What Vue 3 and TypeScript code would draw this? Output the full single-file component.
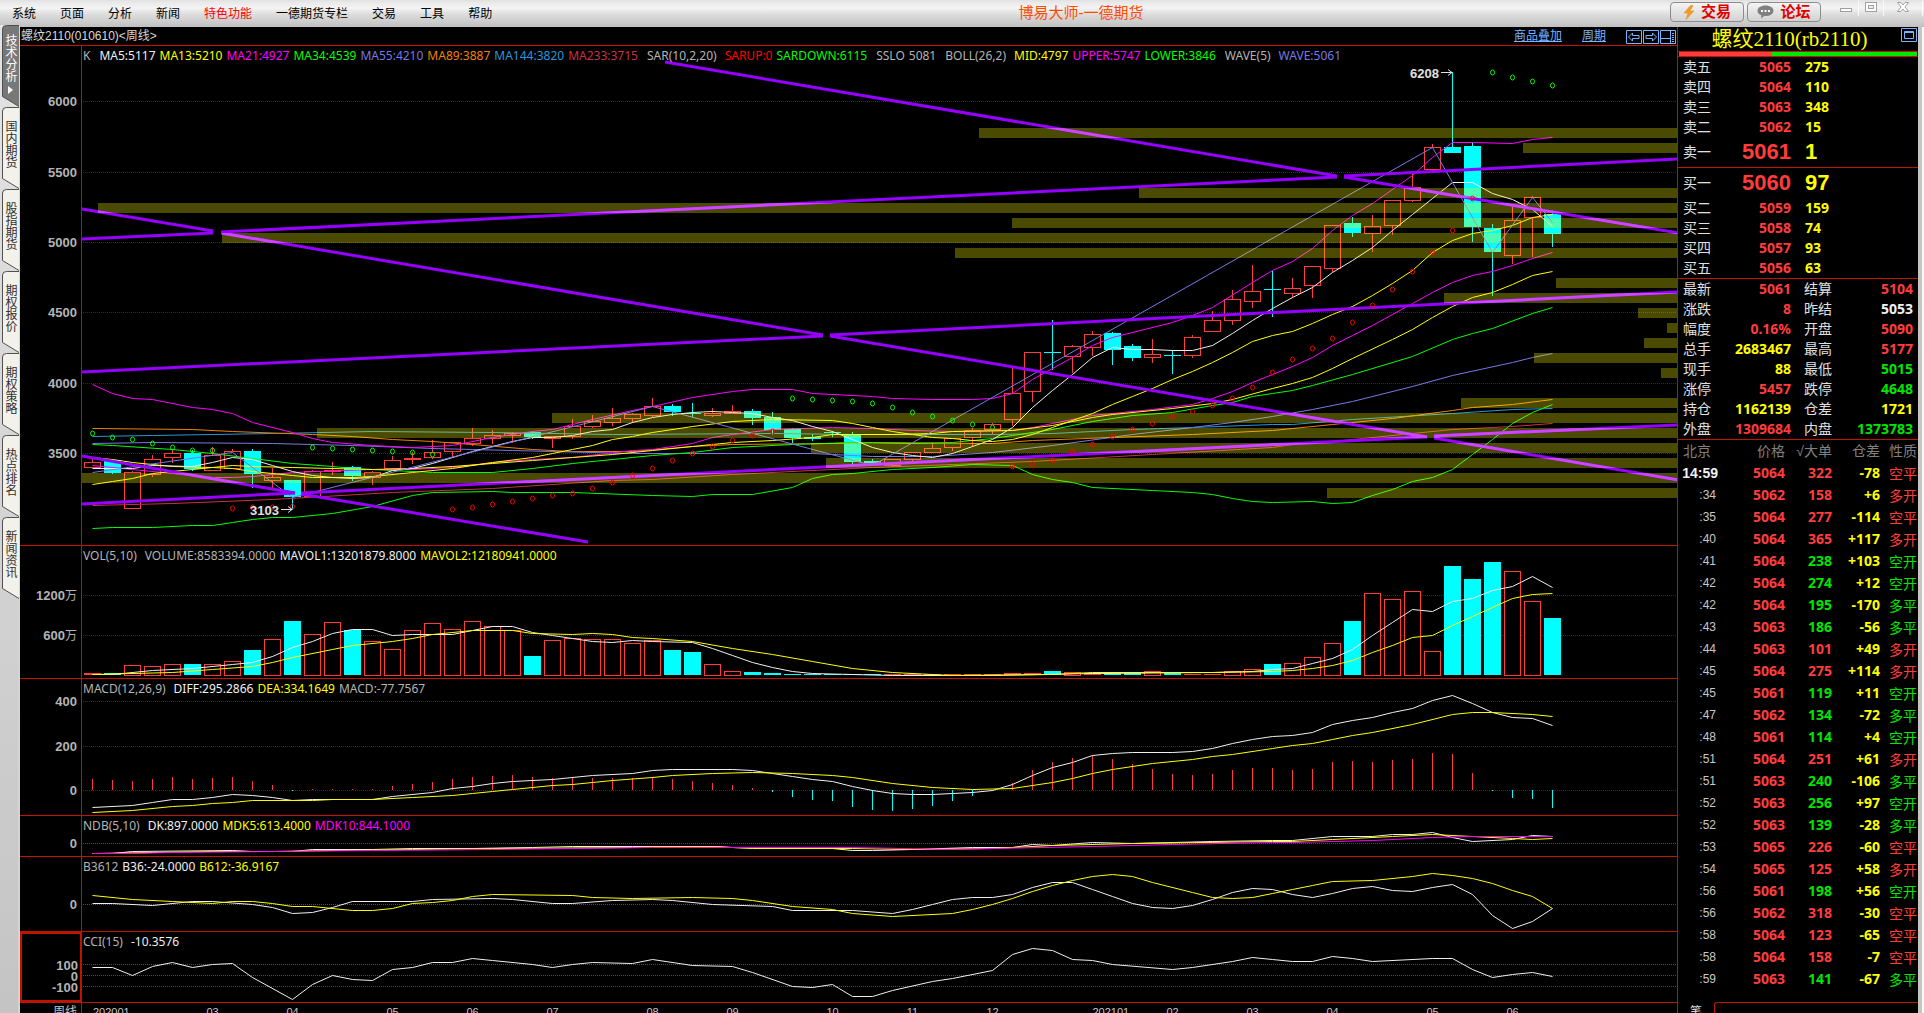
<script setup lang="ts">
type Candle = { x: number; up: boolean; top: number; bottom: number; high: number; low: number }
type Seg = { t: string; c: string }
type Line = { c: string; d: string }
type Pane = {
  id: string
  top: number
  height: number
  bright: boolean
  legend: Seg[][]
  ticks: { y: number; t: string; cjk?: string }[]
  lines: Line[]
}

const STEP = 20
const cx = (i: number) => 10.5 + STEP * i

const W = '#f0f0f0'
const Y = '#ffff00'
const M = '#ff00ff'
const G = '#00ff00'
const GREY = '#b4b4b4'
const BLUE = '#7878e6'

/* "index:y" pairs to polyline points inside a pane that starts at `top` */
const pts = (spec: string, top: number) =>
  spec.split(' ').map((p) => {
    const [i, y] = p.split(':').map(Number)
    return `${cx(i)},${y - top + 0.5}`
  }).join(' ')

/* direction, body top, body bottom, high, low */
const candleSpec =
  'R462,467,459,467 C460,473,459,474 R472,508,471,509 R459,474,455,477 R453,457,449,463 C453,469,450,471 R455,470,447,471 R451,468,449,468 C451,474,449,488 R477,480,468,488 ' +
  'C480,497,480,510 R471,496,470,497 R470,471,462,475 C467,476,466,481 R472,477,471,485 R460,468,456,468 R458,459,452,464 R452,457,440,459 R442,451,442,458 R438,443,428,446 ' +
  'R435,438,430,444 R433,435,432,443 C432,437,431,439 R436,438,436,448 R426,436,419,439 R421,426,415,428 R418,422,408,426 R414,418,413,423 R406,415,398,417 C406,412,404,416 ' +
  'C413,414,403,417 R413,415,408,417 R411,413,405,414 C411,418,409,425 C417,430,412,435 C429,438,428,443 C437,439,434,441 C432,433,431,437 C434,462,432,464 C461,465,459,466 ' +
  'R459,465,459,467 R452,459,452,461 R448,452,443,453 R438,447,438,451 R430,437,428,447 R424,429,423,434 R393,419,367,426 R352,391,352,402 C352,353,320,370 R346,356,345,373 ' +
  'R334,347,331,356 C333,350,332,365 C346,358,344,361 R354,357,339,363 C355,356,350,374 R337,355,335,358 R320,331,311,331 R299,320,290,325 R291,301,265,308 C289,290,271,317 ' +
  'R288,293,278,298 R266,285,266,298 R225,268,225,272 C223,233,217,237 R226,233,215,252 R200,225,200,235 R187,200,173,202 R147,169,144,169 C147,153,72,153 C146,227,142,242 ' +
  'C228,252,224,296 R220,255,204,264 R197,217,196,257 C214,234,210,247'

const candles: Candle[] = candleSpec.split(' ').map((s, i) => {
  const [top, bottom, high, low] = s.slice(1).split(',').map((n) => Number(n) - 46)
  return { x: cx(i), up: s[0] === 'R', top, bottom, high, low }
})

const profile = [
  [979, 128], [1523, 143], [1139, 188], [98, 203], [1012, 218], [222, 233], [955, 248], [1556, 278],
  [1444, 293], [1638, 308], [1667, 323], [1644, 338], [1534, 353], [1661, 368], [1461, 398], [552, 413],
  [317, 428], [811, 443], [826, 458], [82, 473], [1327, 488],
].map(([x, y]) => ({ x: x - 82, y: y - 46 }))

/* each trend line breaks for a few pixels where two of them cross */
const trends = [
  [0, 163, 131, 185], [139, 187, 741, 289], [748, 290, 1345, 391], [1352, 392, 1596, 434],
  [0, 193, 131, 187], [139, 186, 1255, 131], [1262, 130, 1596, 113],
  [583, 16, 1255, 130], [1262, 131, 1596, 187],
  [0, 326, 741, 290], [748, 289, 1596, 246],
  [0, 410, 213, 447], [219, 448, 506, 496],
  [0, 458, 213, 447], [219, 447, 1345, 391], [1352, 390, 1596, 379],
]

const sarSpec =
  'G433 G437 G439 G443 G447 G450 G450 R508 R507 R507 R506 G447 G448 G449 G450 G451 G452 G454 R509 R507 R504 R501 R498 R495 R493 R488 R482 R475 R468 R460 R453 R446 R440 R435 R431 ' +
  'G398 G399 G400 G401 G403 G407 G412 G416 G420 G424 G427 R466 R464 R460 R451 R444 R436 R429 R423 R416 R411 R405 R398 R387 R372 R359 R348 R338 R322 R305 R289 R271 R252 R230 R198 G72 G77 G81 G85'
const sar = sarSpec.split(' ').map((s, i) => ({ x: cx(i), y: Number(s.slice(1)) - 46, c: s[0] === 'G' ? '#00ff00' : '#ff0000' }))

const volSpec =
  'R673 C673 R665 R666 R664 C664 R664 R661 C650 R639 C621 R634 R622 C630 R641 R649 R630 R623 R629 R621 R626 R630 C656 R640 R638 R639 R639 R643 R640 C650 C652 R664 R671 C672 C673 C674 C674 C674 C674 C674 ' +
  'R674 R674 R674 R674 R674 R674 R673 R673 C671 R672 R673 C673 C673 R671 C673 R674 R674 R671 R669 C664 R663 R657 R643 C621 R593 R599 R591 R651 C566 C579 C562 R571 R601 C618'
const volumes = volSpec.split(' ').map((s, i) => ({ x: cx(i), up: s[0] === 'R', y: Number(s.slice(1)) - 546 }))

const macdSpec =
  '779 780 781 779 777 779 778 777 781 785 791 789 789 789 789 786 784 782 779 777 776 775 777 778 778 778 778 778 777 779 781 783 785 788 792 797 800 801 807 810 811 809 806 801 796 791 ' +
  '783 770 762 758 755 759 764 769 774 775 774 770 768 768 770 769 762 761 762 760 759 753 754 773 791 798 799 808'
const histogram = macdSpec.split(' ').map((s, i) => ({ x: cx(i), y: Number(s) - 679 }))

const panes: Pane[] = [
  {
    id: 'k', top: 46, height: 499, bright: false,
    legend: [
      [{ t: 'K', c: GREY }],
      [
        { t: 'MA5:5117', c: W }, { t: 'MA13:5210', c: Y }, { t: 'MA21:4927', c: M }, { t: 'MA34:4539', c: G },
        { t: 'MA55:4210', c: BLUE }, { t: 'MA89:3887', c: '#f08000' }, { t: 'MA144:3820', c: '#2896dc' }, { t: 'MA233:3715', c: '#c83246' },
      ],
      [{ t: 'SAR(10,2,20)', c: GREY }, { t: 'SARUP:0', c: '#ff0000' }, { t: 'SARDOWN:6115', c: G }],
      [{ t: 'SSLO', c: GREY }, { t: '5081', c: GREY }],
      [{ t: 'BOLL(26,2)', c: GREY }, { t: 'MID:4797', c: Y }, { t: 'UPPER:5747', c: M }, { t: 'LOWER:3846', c: G }],
      [{ t: 'WAVE(5)', c: GREY }, { t: 'WAVE:5061', c: BLUE }],
    ],
    ticks: [{ y: 101, t: '6000' }, { y: 172, t: '5500' }, { y: 242, t: '5000' }, { y: 312, t: '4500' }, { y: 383, t: '4000' }, { y: 453, t: '3500' }],
    lines: [
      { c: '#c83246', d: '0:505 4:503 9:499 15:492 20:488 26:480 28:479 32:474 39:467 43:464 47:461 53:454 59:447 60:444 62:441 66:433 68:429 71:426 73:423' },
      { c: '#2896dc', d: '0:436 3:435 9:433 14:431 20:432 26:434 34:433 38:434 45:434 48:433 52:429 55:427 59:424 60:424 63:419 68:413 71:409 73:408' },
      { c: '#f08000', d: '0:428 5:429 7:431 11:434 13:436 15:439 17:441 19:444 22:449 24:451 27:451 30:446 32:444 37:443 39:442 45:443 47:440 51:437 55:434 59:430 60:428 62:424 65:418 68:410 69:407 71:404 73:399' },
      { c: BLUE, d: '0:443 3:442 9:443 13:445 17:448 21:450 27:453 30:453 36:453 39:456 42:456 45:452 48:445 52:434 55:427 57:422 59:416 61:409 63:401 66:386 68:375 71:362 72:357 73:353' },
      { c: G, d: '0:444 1:445 4:449 6:453 8:458 10:463 12:466 13:468 15:470 17:472 20:472 22:468 24:463 27:457 28:455 30:452 32:447 35:444 38:442 41:443 43:442 45:438 46:435 48:429 50:421 52:415 54:412 56:405 57:402 58:396 59:393 60:390 61:385 63:374 66:356 68:339 69:333 70:328 72:313 73:307' },
      { c: M, d: '0:465 2:469 4:473 5:475 6:477 7:477 8:476 10:472 14:469 16:469 18:467 20:462 22:459 24:457 27:450 28:449 30:443 31:437 32:434 34:429 37:427 39:428 41:430 43:431 46:430 47:427 50:415 53:409 55:404 56:398 57:391 58:382 59:374 60:366 61:357 62:345 63:335 64:325 65:314 66:303 67:292 68:282 69:275 70:271 71:265 72:258 73:252' },
      { c: M, d: '0:384 1:393 2:398 3:399 5:407 6:409 7:413 8:422 10:432 11:438 12:442 14:445 16:447 18:445 20:437 22:431 23:429 25:419 27:410 28:406 30:397 32:391 33:389 35:389 36:393 39:396 40:398 42:399 44:399 45:398 46:393 47:379 49:357 50:345 51:337 54:322 55:315 56:307 58:282 59:270 60:261 61:248 62:230 63:215 64:203 65:189 66:175 67:157 68:142 69:142 71:143 72:139 73:137' },
      { c: G, d: '0:528 1:527 3:527 5:525 6:525 7:522 8:519 9:517 10:517 12:513 14:506 16:495 17:492 20:491 21:492 24:492 28:495 30:496 31:494 33:494 35:487 36:478 37:474 38:473 40:469 42:467 44:464 46:465 47:474 48:479 49:482 50:487 53:490 55:492 56:494 57:498 58:501 59:502 61:501 62:503 63:502 64:495 65:489 66:481 67:477 68:469 69:454 70:439 71:423 72:412 73:404' },
      { c: Y, d: '0:484 1:481 2:478 3:473 4:471 5:469 6:467 7:465 8:466 10:467 12:468 14:469 16:468 18:466 20:463 22:460 24:457 26:454 28:450 30:446 32:442 34:440 36:437 37:434 40:434 42:433 43:431 46:430 48:425 50:417 51:414 54:408 56:403 57:399 59:388 60:383 61:377 62:368 63:358 65:339 66:329 67:317 68:306 69:297 70:292 71:284 72:275 73:271' },
      { c: Y, d: '0:457 1:459 2:462 4:466 6:467 7:468 8:471 10:475 11:477 13:477 14:476 16:472 18:468 20:462 22:457 23:453 24:449 25:445 26:439 27:436 28:432 30:426 32:421 34:419 37:420 38:423 39:427 40:431 41:434 42:437 43:438 44:440 45:441 46:439 47:434 48:427 49:420 50:413 51:404 52:396 53:388 54:379 55:371 56:362 57:352 58:341 59:335 60:331 61:323 62:314 63:306 64:295 65:283 66:270 67:252 68:240 69:233 70:230 71:225 72:217 73:214' },
      { c: W, d: '0:468 2:468 3:465 5:466 6:462 7:457 8:459 9:465 10:471 11:475 12:477 13:478 14:477 15:470 16:468 17:463 18:457 19:451 20:446 21:441 22:437 23:437 24:435 25:431 26:429 27:422 28:417 29:414 30:412 31:411 32:412 33:413 34:417 35:420 36:426 37:431 38:439 39:447 40:452 41:455 42:457 43:453 44:446 45:439 46:427 47:407 48:390 49:374 50:357 51:347 52:349 53:349 54:350 55:350 56:345 57:333 58:320 59:308 60:297 61:287 62:272 63:260 64:247 65:230 66:214 67:198 68:182 69:182 70:193 71:199 72:209 73:226' },
      { c: BLUE, d: '0:472 7:452 10:497 28:406 39:465 67:147 70:252 72:197 73:222' },
    ],
  },
  {
    id: 'vol', top: 546, height: 132, bright: false,
    legend: [[{ t: 'VOL(5,10)', c: GREY }, { t: 'VOLUME:8583394.0000', c: GREY }, { t: 'MAVOL1:13201879.8000', c: W }, { t: 'MAVOL2:12180941.0000', c: Y }]],
    ticks: [{ y: 595, t: '1200', cjk: '万' }, { y: 635, t: '600', cjk: '万' }],
    lines: [
      { c: W, d: '0:674 1:674 3:670 5:668 7:664 8:662 9:656 10:647 11:641 12:633 13:629 14:629 15:635 16:634 18:634 19:630 20:626 21:626 22:632 23:635 24:638 25:641 26:642 27:640 28:641 30:642 31:648 32:655 33:662 34:667 35:671 36:673 40:675 45:675 50:673 56:672 58:671 59:669 60:668 61:663 62:658 63:649 64:635 65:622 66:609 67:611 68:601 69:598 70:590 71:586 72:576 73:587' },
      { c: Y, d: '0:674 4:672 6:669 8:666 9:662 10:657 12:649 13:645 15:641 16:638 17:634 19:630 21:630 22:633 24:634 25:633 26:634 27:637 28:638 30:641 32:648 34:654 36:661 38:668 40:672 43:675 48:674 50:672 56:672 59:671 60:670 61:668 62:665 63:660 64:652 65:645 66:637 67:635 68:625 69:616 70:607 71:598 72:594 73:593' },
    ],
  },
  {
    id: 'macd', top: 679, height: 136, bright: false,
    legend: [[{ t: 'MACD(12,26,9)', c: GREY }, { t: 'DIFF:295.2866', c: W }, { t: 'DEA:334.1649', c: Y }, { t: 'MACD:-77.7567', c: GREY }]],
    ticks: [{ y: 701, t: '400' }, { y: 746, t: '200' }, { y: 790, t: '0' }],
    lines: [
      { c: W, d: '0:807 2:805 3:802 4:799 5:799 6:797 7:794 8:795 9:797 10:800 11:799 14:799 15:796 17:792 18:788 19:786 20:783 21:781 23:779 25:775 27:773 28:770 29:769 32:769 33:770 34:773 35:776 36:779 37:781 38:786 39:790 40:793 41:794 42:794 43:793 44:792 45:790 46:784 47:775 48:767 49:762 50:755 51:753 52:752 54:752 55:751 56:748 57:743 58:739 59:736 60:735 61:732 62:724 63:720 64:717 65:712 66:708 67:700 68:695 69:703 70:712 71:717 72:718 73:725' },
      { c: Y, d: '0:812 2:810 4:806 5:805 6:803 7:802 8:800 11:800 12:799 14:799 16:797 18:795 19:793 20:791 21:789 23:785 24:784 25:782 26:780 28:777 29:775 31:773 33:772 35:773 37:775 38:777 40:783 42:787 44:789 46:788 47:785 48:782 49:778 50:773 51:769 53:763 55:759 56:756 57:754 59:748 60:745 61:743 62:739 63:735 64:732 66:724 68:714 69:712 70:712 72:714 73:716' },
    ],
  },
  {
    id: 'ndb', top: 816, height: 40, bright: true,
    legend: [[{ t: 'NDB(5,10)', c: GREY }, { t: 'DK:897.0000', c: W }, { t: 'MDK5:613.4000', c: Y }, { t: 'MDK10:844.1000', c: M }]],
    ticks: [{ y: 843, t: '0' }],
    lines: [
      { c: W, d: '0:853 1:853 2:851 7:850 8:851 10:851 11:849 14:849 16:848 19:848 22:847 24:846 27:846 31:846 32:847 34:848 37:848 38:850 39:850 41:849 44:847 46:847 47:844 48:845 50:842 52:843 56:841 59:840 60:840 62:836 64:836 65:834 66:834 67:832 68:837 69:841 71:839 72:835 73:836' },
      { c: Y, d: '0:853 3:852 6:851 9:851 12:850 16:849 20:848 27:847 28:846 31:846 33:848 38:848 41:849 45:848 48:845 52:843 59:841 60:841 62:839 65:836 67:834 69:836 71:838 72:839 73:838' },
      { c: M, d: '0:853 2:853 4:852 9:851 14:850 20:849 24:848 28:847 38:847 43:849 45:848 50:846 54:844 59:842 60:842 64:840 67:837 69:836 73:836' },
    ],
  },
  {
    id: 'b36', top: 857, height: 74, bright: true,
    legend: [[{ t: 'B3612', c: GREY }, { t: 'B36:-24.0000', c: W }, { t: 'B612:-36.9167', c: Y }]],
    ticks: [{ y: 904, t: '0' }],
    lines: [
      { c: W, d: '0:903 1:903 3:905 5:901 6:901 8:904 9:907 10:913 11:912 12:907 13:901 16:901 17:899 20:898 21:899 23:903 24:903 26:900 28:899 29:900 31:904 34:906 35:910 38:910 40:913 41:909 42:904 43:899 44:897 45:897 46:894 47:887 48:882 49:882 50:889 51:896 52:903 53:907 54:908 55:905 56:899 57:892 58:888 59:889 60:894 61:897 62:893 63:888 64:886 65:890 66:891 67:887 68:884 69:894 70:915 71:928 72:921 73:908' },
      { c: Y, d: '0:895 2:899 4:901 6:903 7:901 8:901 9:903 10:906 11:906 13:910 14:910 15:908 16:903 17:902 18:900 19:896 20:894 24:895 25:897 27:898 30:897 32:898 33:900 35:906 37:909 38:913 40:916 43:913 44:909 45:904 46:898 47:891 48:885 49:880 50:876 51:874 52:876 53:882 55:892 56:897 57:898 58:897 59:893 60:889 61:885 62:881 64:880 66:876 67:873 68:875 69:878 70:883 71:890 72:896 73:908' },
    ],
  },
  {
    id: 'cci', top: 932, height: 70, bright: true,
    legend: [[{ t: 'CCI(15)', c: GREY }, { t: '-10.3576', c: W }]],
    ticks: [{ y: 964, t: '100' }, { y: 975, t: '0' }, { y: 986, t: '-100' }],
    lines: [
      { c: W, d: '0:967 1:967 2:975 3:966 4:962 5:967 6:964 7:963 8:977 10:999 11:984 12:975 13:979 14:980 15:969 16:967 17:962 18:962 19:958 20:960 22:964 23:967 24:964 25:962 27:963 28:959 30:965 32:966 33:972 35:986 36:987 37:984 38:996 39:996 40:990 42:981 43:978 45:970 46:954 47:948 48:950 49:959 50:960 51:964 54:969 55:967 57:961 58:957 59:959 60:961 61:961 62:956 63:958 64:961 67:958 68:958 69:969 70:977 71:974 72:972 73:976' },
    ],
  },
]

const months: [number, string][] = [
  [6, '03'], [10, '04'], [15, '05'], [19, '06'], [23, '07'], [28, '08'], [32, '09'], [37, '10'], [41, '11'], [45, '12'],
  [50, '202101'], [54, '02'], [58, '03'], [62, '04'], [67, '05'], [71, '06'],
]

const menu = ['系统', '页面', '分析', '新闻', '特色功能', '一德期货专栏', '交易', '工具', '帮助']
const tabs = ['技术分析', '国内期货', '股指期货', '期权报价', '期权策略', '热点排名', '新闻资讯']

const asks = [['卖五', '5065', '275'], ['卖四', '5064', '110'], ['卖三', '5063', '348'], ['卖二', '5062', '15'], ['卖一', '5061', '1']]
const bids = [['买一', '5060', '97'], ['买二', '5059', '159'], ['买三', '5058', '74'], ['买四', '5057', '93'], ['买五', '5056', '63']]

/* label, value, tone, label, value, tone */
const stats = [
  ['最新', '5061', 'r', '结算', '5104', 'r'],
  ['涨跌', '8', 'r', '昨结', '5053', 'w'],
  ['幅度', '0.16%', 'r', '开盘', '5090', 'r'],
  ['总手', '2683467', 'y', '最高', '5177', 'r'],
  ['现手', '88', 'y', '最低', '5015', 'g'],
  ['涨停', '5457', 'r', '跌停', '4648', 'g'],
  ['持仓', '1162139', 'y', '仓差', '1721', 'y'],
  ['外盘', '1309684', 'r', '内盘', '1373783', 'g'],
]

const trades = [
  '14:59 5064 322 -78 空平', ':34 5062 158 +6 多开', ':35 5064 277 -114 空平', ':40 5064 365 +117 多开',
  ':41 5064 238 +103 空开', ':42 5064 274 +12 空开', ':42 5064 195 -170 多平', ':43 5063 186 -56 多平',
  ':44 5063 101 +49 多开', ':45 5064 275 +114 多开', ':45 5061 119 +11 空开', ':47 5062 134 -72 多平',
  ':48 5061 114 +4 空开', ':51 5064 251 +61 多开', ':51 5063 240 -106 多平', ':52 5063 256 +97 空开',
  ':52 5063 139 -28 多平', ':53 5065 226 -60 空平', ':54 5065 125 +58 多开', ':56 5061 198 +56 空开',
  ':56 5062 318 -30 空平', ':58 5064 123 -65 空平', ':58 5064 158 -7 空平', ':59 5063 141 -67 多平',
].map((s) => {
  const [time, price, size, diff, kind] = s.split(' ')
  return { time, price, size, diff, kind, tone: kind === '空开' || kind === '多平' ? 'g' : 'r' }
})
</script>

<template>
  <div class="app">
    <header class="menubar">
      <nav class="menu">
        <button v-for="m in menu" :key="m" type="button" :class="{ hot: m === '特色功能' }">{{ m }}</button>
      </nav>
      <div class="brand">博易大师-一德期货</div>
      <div class="tools">
        <button type="button" class="pill">
          <svg width="12" height="15" viewBox="0 0 12 15"><path d="M7.500 0.500L1 8h4L3 14.500 11 6H7L10 0.500z" fill="#f59a23" stroke="#d98a20" stroke-width=".5" /></svg>
          交易
        </button>
        <button type="button" class="pill">
          <svg width="17" height="14" viewBox="0 0 17 14"><path d="M8.500 0.500c4.600 0 8 2.300 8 5.300s-3.400 5.300-8 5.300l-1.200-.1L4 13.500l.4-3.200C2 9.400.5 7.700.5 5.800.5 2.800 3.900.500 8.500.500z" fill="#808080" /><g fill="#fff"><rect x="4" y="5" width="2" height="2" /><rect x="7.500" y="5" width="2" height="2" /><rect x="11" y="5" width="2" height="2" /></g></svg>
          论坛
        </button>
        <div class="win">
          <button type="button" aria-label="最小化"><svg width="14" height="14"><rect x="1.500" y="8.500" width="11" height="3" fill="#fff" stroke="#a0a0a0" /></svg></button>
          <button type="button" aria-label="最大化"><svg width="14" height="14"><rect x="1.500" y="2.500" width="11" height="9" fill="#fff" stroke="#a0a0a0" /><rect x="4.500" y="5.500" width="5" height="3" fill="#eee" stroke="#a0a0a0" /></svg></button>
          <button type="button" class="close" aria-label="关闭"><svg width="14" height="14"><path d="M1.500 2.500h3.500L7 5l2-2.500h3.500L9 7l3.500 4.500H9L7 9l-2 2.500H1.500L5 7z" fill="#fff" stroke="#a0a0a0" /></svg></button>
        </div>
      </div>
    </header>

    <div class="body">
      <aside class="side">
        <button v-for="(t, i) in tabs" :key="t" type="button" class="tab" :class="{ on: i === 0 }">
          <svg class="shape" width="17" height="82"><path d="M17 0.500H4.500Q0.500 0.500 0.500 4V71.500L17 81.500" /></svg>
          <span>{{ t }}</span>
          <svg v-if="i === 0" class="arrow" width="5" height="8"><path d="M0 0L5 4L0 8z" fill="#fff" /></svg>
        </button>
      </aside>

      <main class="chart">
        <div class="chart-head">
          <span class="symbol">螺纹2110(010610)&lt;周线&gt;</span>
          <a href="#" class="link">商品叠加</a>
          <a href="#" class="link">周期</a>
          <div class="nav">
            <button type="button" aria-label="向左"><svg width="16" height="14"><path d="M.5.500h15v13H.5zM2.500 7l4-4v2.500h6.500v3H6.500V11z" /></svg></button>
            <button type="button" aria-label="向右"><svg width="16" height="14"><path d="M.5.500h15v13H.5zM13.500 7l-4-4v2.500H3v3h6.500V11z" /></svg></button>
            <button type="button" aria-label="分栏"><svg width="16" height="14"><path d="M.5.500h15v13H.5zM10.500.500v13M.5 8.500h10M12 3.500h2M12 5.500h2M12 7.500h2M12 9.500h2M12 11.500h2" /></svg></button>
          </div>
        </div>

        <section v-for="p in panes" :key="p.id" class="pane" :class="p.id">
          <svg class="axis" :height="p.height">
            <template v-for="k in p.ticks" :key="k.y">
              <text x="57" :y="k.y - p.top + 5" text-anchor="end">{{ k.t }}<tspan v-if="k.cjk" class="cjk">{{ k.cjk }}</tspan></text>
            </template>
          </svg>
          <div class="plot">
            <svg width="100%" :height="p.height">
              <line v-for="k in p.ticks" :key="k.y" x1="1" x2="100%" :y1="k.y - p.top + 0.5" :y2="k.y - p.top + 0.5" class="grid" :class="{ bright: p.bright }" />

              <template v-if="p.id === 'vol'">
                <g v-for="(v, i) in volumes" :key="i" shape-rendering="crispEdges">
                  <rect v-if="v.up && v.y < 127" :x="v.x - 8" :y="v.y + 0.5" width="16" :height="128.500 - v.y" fill="#000" stroke="#ff3c3c" />
                  <rect v-else :x="v.x - 8.500" :y="v.y" width="17" :height="129 - v.y" :fill="v.up ? '#ff3c3c' : '#00ffff'" />
                </g>
              </template>

              <g v-if="p.id === 'macd'" shape-rendering="crispEdges">
                <line v-for="(h, i) in histogram" :key="i" :x1="h.x" :x2="h.x" y1="111" :y2="h.y" :stroke="h.y < 111 ? '#ff3c3c' : '#00ffff'" />
              </g>

              <g v-if="p.id === 'k'" shape-rendering="crispEdges">
                <template v-for="(c, i) in candles" :key="i">
                  <template v-if="c.up">
                    <line :x1="c.x" :x2="c.x" :y1="c.high" :y2="c.top" stroke="#ff3c3c" />
                    <line :x1="c.x" :x2="c.x" :y1="c.bottom" :y2="c.low" stroke="#ff3c3c" />
                    <rect :x="c.x - 8" :y="c.top + 0.5" width="16" :height="c.bottom - c.top" fill="none" stroke="#ff3c3c" />
                  </template>
                  <template v-else>
                    <line :x1="c.x" :x2="c.x" :y1="c.high" :y2="c.low" stroke="#00ffff" />
                    <rect :x="c.x - 8.500" :y="c.top" width="17" :height="c.bottom - c.top" fill="#00ffff" />
                  </template>
                </template>
              </g>

              <polyline v-for="(l, i) in p.lines" :key="i" :points="pts(l.d, p.top)" :stroke="l.c" fill="none" />

              <template v-if="p.id === 'k'">
                <rect v-for="b in profile" :key="b.y" :x="b.x" :y="b.y" width="100%" height="10" fill="#ffff00" fill-opacity=".29" />
                <clipPath id="bands"><rect v-for="b in profile" :key="b.y" :x="b.x" :y="b.y" width="3000" height="10" /></clipPath>
                <g stroke="#9600ff" stroke-width="3"><line v-for="(t, i) in trends" :key="i" :x1="t[0]" :y1="t[1]" :x2="t[2]" :y2="t[3]" /></g>
                <g stroke="#cd46ff" stroke-width="3" clip-path="url(#bands)"><line v-for="(t, i) in trends" :key="i" :x1="t[0]" :y1="t[1]" :x2="t[2]" :y2="t[3]" /></g>
                <ellipse v-for="(s, i) in sar" :key="i" :cx="s.x" :cy="s.y + 0.5" rx="2" ry="2.500" fill="none" :stroke="s.c" />
                <g class="mark">
                  <text x="1357" y="32" text-anchor="end">6208</text>
                  <path d="M1359 26.500h11M1366 23.500l4 3l-4 3" />
                  <text x="197" y="469" text-anchor="end">3103</text>
                  <path d="M199 463.500h11M206 460.500l4 3l-4 3" />
                </g>
              </template>
            </svg>
            <div class="legend">
              <div v-for="(g, i) in p.legend" :key="i" class="group">
                <span v-for="s in g" :key="s.t" :class="{ title: s.t.endsWith(')') }" :style="{ color: s.c }">{{ s.t }}</span>
              </div>
            </div>
          </div>
        </section>

        <div class="dates">
          <span class="period">周线</span>
          <svg class="months" height="20">
            <text x="11" y="13">202001</text>
            <text v-for="[i, t] in months" :key="i" :x="cx(i)" y="13" :text-anchor="t.length > 2 ? 'start' : 'middle'">{{ t }}</text>
          </svg>
        </div>
      </main>

      <aside class="quote">
        <div class="quote-head">
          <h1>螺纹2110(rb2110)</h1>
          <button type="button" aria-label="放大"><svg width="16" height="14"><path d="M.5.500h15v13H.5zM3.500 3.500h9v7h-9zM3.500 4.500h9" /></svg></button>
        </div>
        <div class="ratio"><i></i><b></b></div>

        <table class="book asks">
          <tbody>
            <tr v-for="r in asks" :key="r[0]" :class="{ best: r[0] === '卖一' }"><th scope="row">{{ r[0] }}</th><td class="r">{{ r[1] }}</td><td class="y">{{ r[2] }}</td></tr>
          </tbody>
        </table>
        <table class="book">
          <tbody>
            <tr v-for="r in bids" :key="r[0]" :class="{ best: r[0] === '买一' }"><th scope="row">{{ r[0] }}</th><td class="r">{{ r[1] }}</td><td class="y">{{ r[2] }}</td></tr>
          </tbody>
        </table>
        <table class="stats">
          <tbody>
            <tr v-for="s in stats" :key="s[0]"><th scope="row">{{ s[0] }}</th><td :class="s[2]">{{ s[1] }}</td><th scope="row" class="second">{{ s[3] }}</th><td class="last" :class="s[5]">{{ s[4] }}</td></tr>
          </tbody>
        </table>
        <table class="trades">
          <thead>
            <tr><th class="c1">北京</th><th class="c2">价格</th><th class="c3">√大单</th><th class="c4">仓差</th><th class="c5">性质</th></tr>
          </thead>
          <tbody>
            <tr v-for="(t, i) in trades" :key="i">
              <td class="time" :class="{ full: i === 0 }">{{ t.time }}</td><td class="r">{{ t.price }}</td><td :class="t.tone">{{ t.size }}</td><td class="y">{{ t.diff }}</td><td class="kind" :class="t.tone">{{ t.kind }}</td>
            </tr>
          </tbody>
        </table>
        <div class="foot"><button type="button">笔</button><div></div></div>
      </aside>
      <div class="edge"></div>
    </div>
  </div>
</template>

<style>
body {
  background: #000;
  overflow: hidden;
}
</style>

<style scoped>
.app {
  display: flex;
  flex-direction: column;
  height: 100vh;
  overflow: hidden;
  background: #000;
  font: 12px/16px "Liberation Sans", "Noto Sans CJK SC", sans-serif;
}
button {
  padding: 0;
  border: 0;
  background: none;
  font: inherit;
  color: inherit;
}
svg {
  display: block;
}

.menubar {
  display: flex;
  flex: none;
  justify-content: space-between;
  height: 27px;
  background: linear-gradient(#e0e0e0 0, #e8e8e8 2px, #f4f4f4 8px, #dedede 14px, #c0c0c0 27px);
  color: #000;
}
.menu {
  display: flex;
  gap: 24px;
  padding-left: 12px;
}
.hot {
  color: #ff0000;
}
.brand {
  font-size: 15px;
  line-height: 25px;
  color: #ff4b00;
}
.tools {
  display: flex;
  gap: 3px;
  padding-right: 1px;
}
.pill {
  display: flex;
  align-items: center;
  justify-content: center;
  gap: 6px;
  box-sizing: border-box;
  width: 74px;
  height: 20px;
  margin-top: 2px;
  border: 1px solid #8c8c8c;
  border-radius: 4px;
  background: linear-gradient(#f4f4f4, #d2d2d2);
  font-size: 15px;
  font-weight: bold;
  line-height: 18px;
  color: #e00000;
}
.win {
  display: flex;
  margin-left: 10px;
}
.win button {
  display: flex;
  justify-content: center;
  width: 25px;
  height: 16px;
  border-right: 1px solid #f8f8f8;
}
.win .close {
  width: 39px;
}

.body {
  display: flex;
  flex: 1;
  min-height: 0;
}
.side {
  flex: none;
  box-sizing: border-box;
  width: 20px;
  margin-top: -2px;
  padding-left: 2px;
  border-right: 2px solid #d4d4d4;
  background: linear-gradient(#e4e4e4, #c4c4c4);
}
.tab {
  position: relative;
  display: flex;
  flex-direction: column;
  align-items: center;
  width: 16px;
  height: 82px;
  padding-top: 13px;
  color: #303030;
}
.tab.on {
  padding-top: 9px;
  color: #fff;
}
.shape {
  position: absolute;
  inset: 0;
  fill: #f2f1ea;
  stroke: #505050;
}
.on .shape {
  fill: #787878;
}
.tab span {
  position: relative;
  width: 12px;
  line-height: 12px;
  writing-mode: vertical-rl;
}
.arrow {
  position: relative;
  margin-top: 4px;
}

.chart {
  display: flex;
  flex: 1;
  flex-direction: column;
  min-width: 0;
  overflow: hidden;
}
.chart-head {
  display: flex;
  flex: none;
  height: 18px;
  padding: 0 1px;
  border-bottom: 1px solid #c01400;
  line-height: 18px;
}
.symbol {
  flex: 1;
  color: #d8d8d8;
}
.link {
  margin-right: 20px;
  color: #78b4ff;
}
.nav {
  display: flex;
  gap: 1px;
  padding-top: 1px;
}
.nav svg,
.quote-head svg {
  fill: none;
  stroke: #78b4ff;
}

.pane {
  display: flex;
  flex: none;
  border-bottom: 1px solid #c01400;
}
.axis {
  flex: none;
  box-sizing: border-box;
  width: 62px;
  border-right: 1px solid #c01400;
  font-size: 13px;
  font-weight: bold;
  fill: #b4b4b4;
}
.cci .axis {
  border: 1px solid #c01400;
  outline: 1px solid #c01400;
  outline-offset: -2px;
}
.cjk {
  font-size: 12px;
  font-weight: normal;
}
.plot {
  display: grid;
  flex: 1;
  min-width: 0;
}
.plot > * {
  grid-area: 1 / 1;
}
.legend {
  display: flex;
  gap: 9px;
  padding: 2px 0 0 1px;
  font-family: "Noto Sans", sans-serif;
  white-space: nowrap;
}
.group {
  display: flex;
  gap: 4px;
}
.title {
  margin-right: 4px;
}
.grid {
  stroke: #960000;
  stroke-dasharray: 1 1;
}
.grid.bright {
  stroke: #dc1400;
}
.mark {
  font-size: 13px;
  font-weight: bold;
  fill: #e0e0e0;
}
.mark path {
  fill: none;
  stroke: #e0e0e0;
}

.dates {
  display: flex;
  flex: none;
  color: #c8c8c8;
}
.period {
  flex: none;
  box-sizing: border-box;
  width: 62px;
  padding: 1px 4px 0 0;
  border-right: 1px solid #c01400;
  text-align: right;
}
.months {
  flex: 1;
  font-size: 11px;
  fill: #c8c8c8;
}

.quote {
  flex: none;
  width: 240px;
  overflow: hidden;
  border-left: 1px solid #c01400;
}
.quote-head {
  display: flex;
  justify-content: flex-end;
  height: 24px;
  padding-right: 1px;
  border-bottom: 1px solid #c01400;
}
.quote-head h1 {
  flex: 1;
  margin: 0;
  font: 21px/24px "Liberation Serif", "Noto Sans CJK SC", serif;
  text-align: center;
  color: #ffff00;
}
.quote-head button {
  align-self: flex-start;
  margin-top: 1px;
}
.ratio {
  display: flex;
  height: 4px;
  padding: 0 1px;
  border-bottom: 1px solid #c01400;
}
.ratio i {
  width: 39%;
  background: #ff3c3c;
}
.ratio b {
  flex: 1;
  background: #00e600;
}

table {
  width: 100%;
  border-spacing: 0;
  table-layout: fixed;
}
th,
td {
  padding: 0;
  white-space: nowrap;
}
th {
  font-size: 14px;
  font-weight: normal;
  color: #e0e0e0;
  text-align: left;
}
td {
  font: bold 14px/20px "Noto Sans", sans-serif;
  text-align: right;
}
.r {
  color: #ff3c3c;
}
.y {
  color: #ffff00;
}
.g {
  color: #00e600;
}
.w {
  color: #f0f0f0;
}
.book tr,
.stats tr {
  height: 20px;
}
.book .best {
  height: 30px;
}
.best td {
  font: bold 22px/30px "Liberation Sans", sans-serif;
}
.asks,
.stats {
  border-bottom: 1px solid #c01400;
}
.book + .stats {
  border-top: 1px solid #c01400;
}
.book th,
.stats th {
  width: 45px;
  padding-left: 5px;
  line-height: 20px;
}
.book td:nth-child(2),
.stats td:nth-child(2) {
  width: 63px;
}
.book td:last-child {
  padding-left: 14px;
  text-align: left;
}
.stats .second {
  width: 36px;
  padding-left: 13px;
}
.stats .last {
  padding-right: 5px;
}
.trades th,
.trades td {
  height: 22px;
  line-height: 22px;
}
.trades th {
  color: #808080;
  text-align: right;
}
.trades .c1 {
  width: 35px;
  padding-left: 5px;
  text-align: left;
}
.c2 {
  width: 67px;
}
.c3 {
  width: 47px;
}
.c4 {
  width: 48px;
}
.trades .c5,
.trades .kind {
  padding-right: 1px;
}
.trades .time {
  padding-right: 2px;
  font: 12px/22px "Liberation Sans", sans-serif;
  color: #c8c8c8;
}
.trades .time.full {
  padding-right: 0;
  font: bold 14px/22px "Liberation Sans", sans-serif;
  color: #f0f0f0;
}
.trades .kind {
  font: 14px/22px "Noto Sans CJK SC", sans-serif;
}
.foot {
  display: flex;
  margin-top: 12px;
  color: #e0e0e0;
}
.foot button {
  align-self: flex-start;
  width: 36px;
  padding-top: 2px;
}
.foot div {
  flex: 1;
  height: 24px;
  border: solid #c01400;
  border-width: 1px 0 0 1px;
  border-radius: 3px 0 0;
}
.edge {
  flex: none;
  box-sizing: border-box;
  width: 6px;
  border-right: 2px solid #f8f8f8;
  background: #c8c4c0;
}
</style>
